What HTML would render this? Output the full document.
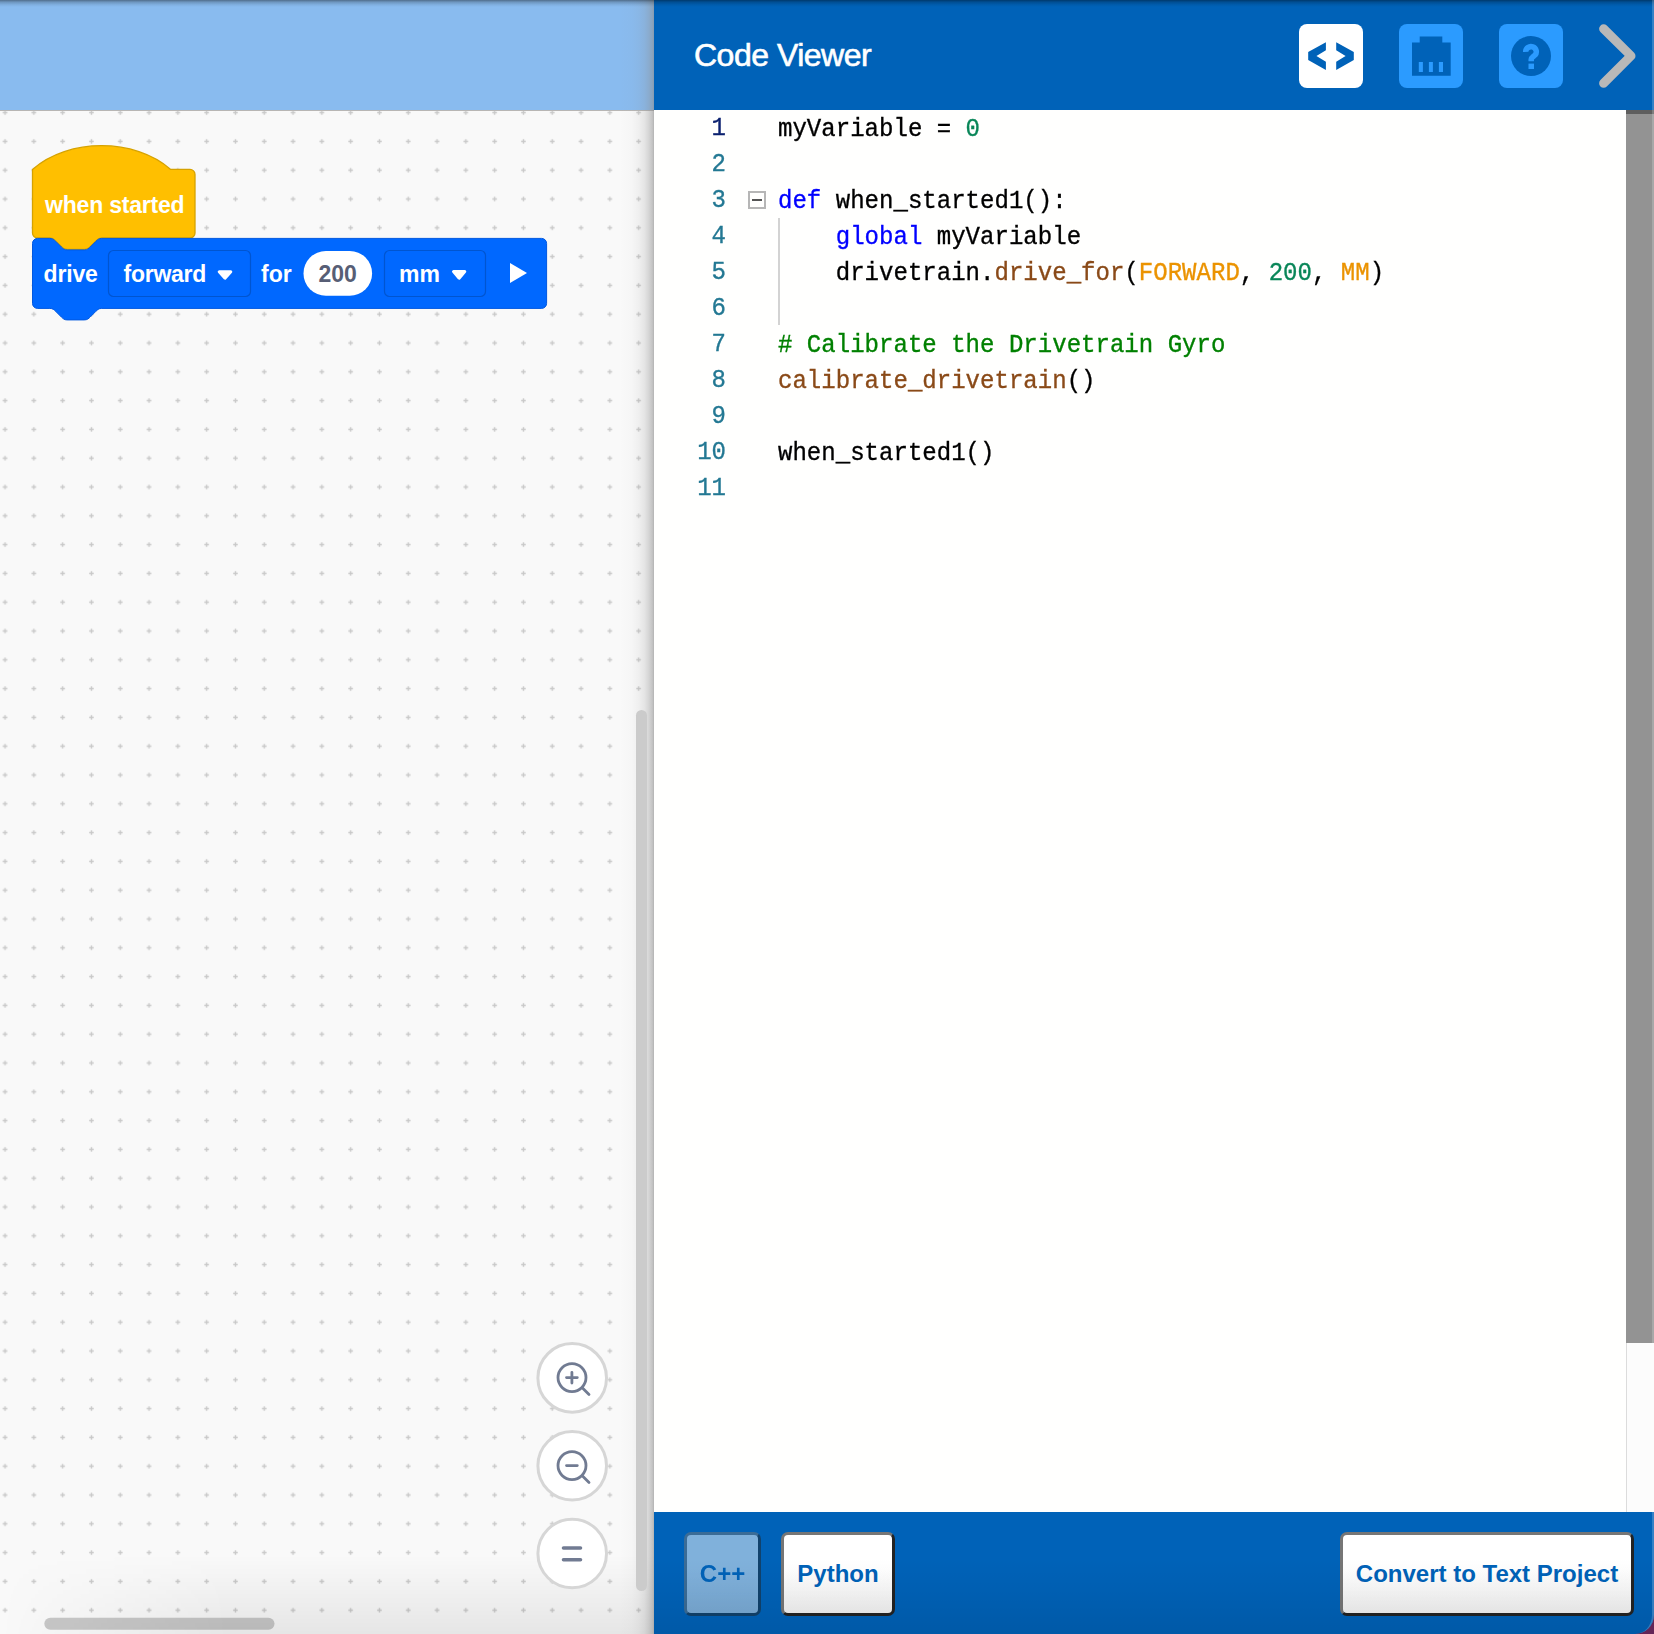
<!DOCTYPE html>
<html><head><meta charset="utf-8">
<style>
*{margin:0;padding:0;box-sizing:border-box}
html,body{width:1654px;height:1634px;overflow:hidden;background:#f9f9f9}
body{position:relative;font-family:"Liberation Sans",sans-serif}
.abs{position:absolute}
#left{left:0;top:0;width:654px;height:1634px;background:#f9f9f9;overflow:hidden}
#lhead{left:0;top:0;width:654px;height:111px;background:#89bbef;border-bottom:1px solid #b8b6b4}
#right{left:654px;top:0;width:1000px;height:1634px;background:#fffffe}
#sideshadow{left:620px;top:0;width:34px;height:1634px;background:linear-gradient(to right,rgba(140,140,140,0),rgba(140,140,140,.03) 35%,rgba(140,140,140,.09) 55%,rgba(140,140,140,.19) 72%,rgba(140,140,140,.32) 84%,rgba(140,140,140,.46) 93%,rgba(140,140,140,.55) 98%,rgba(120,120,120,.62))}
#frame{left:0;top:0;width:1654px;height:1634px;border-right:2px solid rgba(255,255,255,.2);border-bottom-right-radius:19px;box-shadow:0 0 0 60px #652557;pointer-events:none}
#rhead{left:0;top:0;width:1000px;height:110px;background:#0062b8}
#title{left:40px;top:35px;color:#fff;font-size:32px;line-height:40px;white-space:nowrap;letter-spacing:-.5px;-webkit-text-stroke:.6px #fff}
.hbtn{position:absolute;top:24px;width:64px;height:64px;border-radius:8px;background:#2b9bff}
#code{left:0;top:110px;width:972px;height:1402px;background:#fffffe}
.ln{position:absolute;width:72px;text-align:right;font-family:"Liberation Mono",monospace;font-size:26.3px;line-height:36px;color:#237893;transform:scaleX(.9145);transform-origin:72px 0;-webkit-text-stroke:.35px currentColor}
.cl{position:absolute;left:124px;margin-top:1px;font-family:"Liberation Mono",monospace;font-size:26.3px;line-height:36px;color:#000;white-space:pre;transform:scaleX(.9145);transform-origin:0 0;-webkit-text-stroke:.35px currentColor}
.k{color:#0000ff}.n{color:#098658}.f{color:#8a4a18}.c{color:#eb9300}.cm{color:#008000}
#vscroll{left:972px;top:110px;width:28px;height:1402px;background:#fcfcfc;border-left:1px solid #dcdcdc}
#thumb{left:972px;top:110px;width:28px;height:1233px;background:#939393;border-top:4px solid #5e5e5e}
#foot{left:0;top:1512px;width:1000px;height:122px;background:#0062b8}
.btn{position:absolute;top:20px;height:84px;border-style:solid;border-width:3px;border-color:#767676 #232323 #232323 #767676;border-radius:7px;background:linear-gradient(#fff,#fff 45%,#f3f3f3);color:#0062b8;font-weight:bold;font-size:24px;text-align:center;line-height:78px;white-space:nowrap}
#topsh{left:0;top:0;width:1654px;height:7px;background:linear-gradient(rgba(0,0,0,.42),rgba(0,0,0,.2) 30%,rgba(0,0,0,.06) 70%,rgba(0,0,0,0))}
#redge{left:1652px;top:0;width:2px;height:1634px;background:rgba(255,255,255,.22)}
</style></head>
<body>
<div id="left" class="abs">
  <svg class="abs" style="left:0;top:0" width="654" height="1634">
    <defs>
      <pattern id="grid" patternUnits="userSpaceOnUse" width="28.8" height="28.8" x="-9.35" y="98.2">
        <path d="M12.1 14.4h4.6M14.4 12.1v4.6" stroke="#c9c9c9" stroke-width="1.44"/>
      </pattern>
      <linearGradient id="bsh" x1="0" y1="0" x2="0" y2="1">
        <stop offset="0" stop-color="#000" stop-opacity="0"/>
        <stop offset="1" stop-color="#000" stop-opacity=".075"/>
      </linearGradient>
      <linearGradient id="bmg" x1="0" y1="0" x2="1" y2="0">
        <stop offset="0" stop-color="#fff" stop-opacity="0"/>
        <stop offset=".35" stop-color="#fff" stop-opacity="1"/>
      </linearGradient>
      <mask id="bmask"><rect x="0" y="1555" width="654" height="79" fill="url(#bmg)"/></mask>
    </defs>
    <rect x="0" y="0" width="654" height="1634" fill="#f9f9f9"/>
    <rect x="0" y="0" width="654" height="1634" fill="url(#grid)"/>
    <rect x="44.3" y="1617.8" width="230.2" height="12" rx="6" fill="#c8c8c8"/>
    <rect x="0" y="1555" width="654" height="79" fill="url(#bsh)" mask="url(#bmask)"/>
    <!-- hat block -->
    <path d="M32.5,169.4 C68.5,137.7 134.7,137.7 170.7,169.4 H190 A5 5 0 0 1 195,174.4 V233 A5 5 0 0 1 190,238 H101.7 c-2.88,0 -4.32,1.44 -5.76,2.88 l-5.76,5.76 c-1.44,1.44 -2.88,2.88 -5.76,2.88 h-17.28 c-2.88,0 -4.32,-1.44 -5.76,-2.88 l-5.76,-5.76 c-1.44,-1.44 -2.88,-2.88 -5.76,-2.88 H37.5 A5 5 0 0 1 32.5,233 Z" fill="#ffbf00" stroke="#d6a200" stroke-width="1.3"/>
    <text x="45" y="213" fill="#fff" font-family="Liberation Sans" font-weight="bold" font-size="23" letter-spacing="-.2">when started</text>
    <!-- drive block -->
    <path d="M32.5,243.4 A5 5 0 0 1 37.5,238.4 H49.9 c2.88,0 4.32,1.44 5.76,2.88 l5.76,5.76 c1.44,1.44 2.88,2.88 5.76,2.88 h17.28 c2.88,0 4.32,-1.44 5.76,-2.88 l5.76,-5.76 c1.44,-1.44 2.88,-2.88 5.76,-2.88 H541.6 A5 5 0 0 1 546.6,243.4 V303.4 A5 5 0 0 1 541.6,308.4 H101.7 c-2.88,0 -4.32,1.44 -5.76,2.88 l-5.76,5.76 c-1.44,1.44 -2.88,2.88 -5.76,2.88 h-17.28 c-2.88,0 -4.32,-1.44 -5.76,-2.88 l-5.76,-5.76 c-1.44,-1.44 -2.88,-2.88 -5.76,-2.88 H37.5 A5 5 0 0 1 32.5,303.4 Z" fill="#0068ff" stroke="#0058e0" stroke-width="1"/>
    <g font-family="Liberation Sans" font-weight="bold" font-size="23" fill="#fff">
      <text x="43.5" y="281.5" letter-spacing="-.15">drive</text>
      <rect x="108.5" y="250.5" width="142" height="46" rx="5" fill="#0068ff" stroke="#0055d0" stroke-width="1.2"/>
      <text x="123.5" y="281.5" letter-spacing="-.25">forward</text>
      <path d="M219.2,271.8 h11.6 l-5.8,6.4 z" fill="#fff" stroke="#fff" stroke-width="3" stroke-linejoin="round"/>
      <text x="261" y="281.5">for</text>
      <rect x="303.5" y="251" width="68.6" height="44.8" rx="22.4" fill="#fff"/>
      <text x="337.6" y="281.5" fill="#575e75" text-anchor="middle" font-size="23">200</text>
      <rect x="384.5" y="250.5" width="101" height="46" rx="5" fill="#0068ff" stroke="#0055d0" stroke-width="1.2"/>
      <text x="399" y="281.5">mm</text>
      <path d="M453.5,271.6 h11.3 l-5.65,6.6 z" fill="#fff" stroke="#fff" stroke-width="3" stroke-linejoin="round"/>
      <path d="M510,263 L527,273 L510,283 Z" fill="#fff"/>
    </g>
    <!-- zoom controls -->
    <g fill="#fff" stroke="#d6d6d6" stroke-width="3">
      <circle cx="572.2" cy="1377.9" r="34.3"/>
      <circle cx="572.2" cy="1465.8" r="34.3"/>
      <circle cx="572.2" cy="1553.5" r="34.3"/>
    </g>
    <g fill="none" stroke="#717b92" stroke-width="2.8" stroke-linecap="round">
      <circle cx="572" cy="1377.6" r="14"/>
      <path d="M582.5,1388 L589,1394.5 M566.5,1377.6 h10.8 M571.9,1372.3 v10.8"/>
      <circle cx="572" cy="1465.6" r="14"/>
      <path d="M582.5,1476 L589,1482.5 M566.5,1465.6 h10.8"/>
      <path d="M563.5,1548 h17 M563.5,1559.7 h17" stroke-width="3.6"/>
    </g>
    <!-- scrollbars -->
    
    
  </svg>
  <div id="lhead" class="abs"></div>
  <div id="sideshadow" class="abs"></div>
  <svg class="abs" style="left:630px;top:700px" width="24" height="900"><rect x="6" y="10" width="11" height="881" rx="5.5" fill="#cbcbcb"/></svg>
</div>

<div id="right" class="abs">
  <div id="rhead" class="abs">
    <div id="title" class="abs">Code Viewer</div>
    <div class="hbtn" style="left:645px;background:#fff">
      <svg width="64" height="64" style="position:absolute;left:0;top:0">
        <path d="M26.9,18.15 V26.2 L17.46,31.9 L26.9,37.7 V46.07 L9.19,35.96 V27.9 Z M37.2,18.15 L54.8,27.9 V35.96 L37.2,46.07 V37.7 L46.6,31.9 L37.2,26.2 Z" fill="#0062b8"/>
      </svg>
    </div>
    <div class="hbtn" style="left:745px">
      <svg width="64" height="64" style="position:absolute;left:0;top:0">
        <path d="M13,18.4 H20.7 V12.4 H43.3 V18.4 H51.7 V51.8 H13 Z" fill="#0062b8"/>
        <path d="M19.8,38 h4.1 v10 h-4.1z M29.9,38 h4 v10 h-4z M39.9,38 h4.1 v10 h-4.1z" fill="#2b9bff"/>
      </svg>
    </div>
    <div class="hbtn" style="left:845px">
      <svg width="64" height="64" style="position:absolute;left:0;top:0">
        <circle cx="32" cy="32" r="20" fill="#0062b8"/>
        <path d="M26.7,27.9 A5.3,5.1 0 1 1 36,31.1 C34.4,32.6 32.2,33.4 32.2,35.6 V37.2" fill="none" stroke="#2b9bff" stroke-width="5.5"/>
        <rect x="29.5" y="39.6" width="5.5" height="5.4" fill="#2b9bff"/>
      </svg>
    </div>
    <svg class="abs" style="left:940px;top:20px" width="50" height="72">
      <path d="M9.6,8.8 L37,35.9 L9.6,63.2" fill="none" stroke="#b8b8b8" stroke-width="9" stroke-linecap="round" stroke-linejoin="round"/>
    </svg>
  </div>
  <div id="code" class="abs">
    <div class="ln" style="left:0;top:0;color:#0b216f">1</div>
    <div class="ln" style="left:0;top:36px">2</div>
    <div class="ln" style="left:0;top:72px">3</div>
    <div class="ln" style="left:0;top:108px">4</div>
    <div class="ln" style="left:0;top:144px">5</div>
    <div class="ln" style="left:0;top:180px">6</div>
    <div class="ln" style="left:0;top:216px">7</div>
    <div class="ln" style="left:0;top:252px">8</div>
    <div class="ln" style="left:0;top:288px">9</div>
    <div class="ln" style="left:0;top:324px">10</div>
    <div class="ln" style="left:0;top:360px">11</div>
    <div class="cl" style="top:0">myVariable = <span class="n">0</span></div>
    <div class="cl" style="top:72px"><span class="k">def</span> when_started1():</div>
    <div class="cl" style="top:108px">    <span class="k">global</span> myVariable</div>
    <div class="cl" style="top:144px">    drivetrain.<span class="f">drive_for</span>(<span class="c">FORWARD</span>, <span class="n">200</span>, <span class="c">MM</span>)</div>
    <div class="cl" style="top:216px"><span class="cm"># Calibrate the Drivetrain Gyro</span></div>
    <div class="cl" style="top:252px"><span class="f">calibrate_drivetrain</span>()</div>
    <div class="cl" style="top:324px">when_started1()</div>
    <!-- fold icon -->
    <div class="abs" style="left:94px;top:81px;width:18px;height:18px;border:2px solid #b6b6b6"></div>
    <div class="abs" style="left:98px;top:89px;width:10px;height:2px;background:#555"></div>
    <div class="abs" style="left:124px;top:108px;width:2px;height:107px;background:#d3d3d3"></div>
  </div>
  <div id="vscroll" class="abs"></div>
  <div id="thumb" class="abs"></div>
  <div id="foot" class="abs">
    <div class="btn" style="left:30px;width:77px;opacity:.5">C++</div>
    <div class="btn" style="left:127px;width:114px">Python</div>
    <div class="btn" style="left:686px;width:294px">Convert to Text Project</div>
  </div>
</div>
<div class="abs" style="left:654px;top:1558px;width:1000px;height:76px;background:linear-gradient(rgba(0,0,0,0),rgba(0,0,0,.03) 40%,rgba(0,0,0,.09))"></div>
<div id="topsh" class="abs"></div>
<div id="frame" class="abs"></div>
</body></html>
